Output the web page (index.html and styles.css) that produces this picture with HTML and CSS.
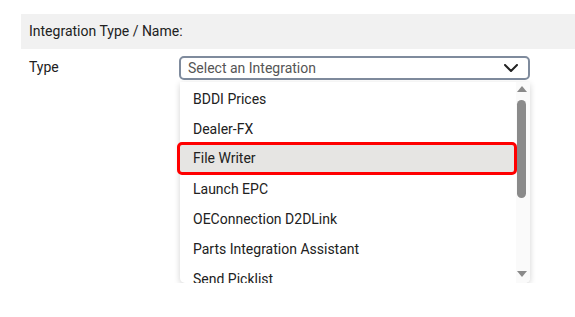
FILE: index.html
```html
<!DOCTYPE html>
<html lang="en">
<head>
    <meta charset="UTF-8">
    <meta name="viewport" content="width=device-width, initial-scale=1.0">
    <title>Integration</title>
    <link rel="stylesheet" href="styles.css">
</head>
<body>
    <div class="container">
        <div class="section-title">Integration Type / Name:</div>
        <div class="form-row">
            <label class="field-label">Type</label>
            <div class="select-wrap">
                <div class="select-box">
                    <span class="placeholder">Select an Integration</span>
                    <svg class="chevron" width="14" height="8" viewBox="0 0 14 8">
                        <path d="M1 1 L7 7 L13 1" fill="none" stroke="#222" stroke-width="2" stroke-linecap="round" stroke-linejoin="round"/>
                    </svg>
                </div>
                <div class="dropdown">
                    <ul class="options">
                        <li>BDDI Prices</li>
                        <li>Dealer-FX</li>
                        <li class="selected">File Writer</li>
                        <li>Launch EPC</li>
                        <li>OEConnection D2DLink</li>
                        <li>Parts Integration Assistant</li>
                        <li>Send Picklist</li>
                    </ul>
                    <div class="scrollbar">
                        <span class="arrow-up"></span>
                        <span class="thumb"></span>
                        <span class="track-gap"></span>
                        <span class="arrow-down"></span>
                    </div>
                </div>
            </div>
        </div>
    </div>
</body>
</html>
```

FILE: styles.css
```css
body {
    margin: 0;
    font-family: Roboto, "Liberation Sans", Arial, sans-serif;
    font-size: 14px;
    color: #212121;
    background: #fff;
}
.container {
    padding: 14px 0 0 21px;
}
.section-title {
    background-color: #f1f1f1;
    height: 35px;
    line-height: 35px;
    padding-left: 8px;
}
.form-row {
    display: flex;
    align-items: flex-start;
    padding-top: 7px;
}
.field-label {
    width: 150px;
    padding-left: 8px;
    line-height: 22px;
}
.select-wrap {
    width: 351px;
    display: flex;
    flex-direction: column;
}
.select-box {
    display: flex;
    align-items: center;
    justify-content: space-between;
    height: 20px;
    border: 2px solid #7f8b9d;
    border-radius: 5px;
    padding: 0 10px 0 7px;
}
.placeholder {
    color: #555;
}
.chevron {
    display: block;
}
.dropdown {
    margin: 2px 0 0 1px;
    height: 201px;
    display: flex;
    background: #fff;
    border-radius: 0 0 5px 5px;
    box-shadow: 0 2px 6px rgba(0,0,0,0.18);
    overflow-x: visible;
    overflow-y: clip;
}
.options {
    flex: 1;
    list-style: none;
    margin: 0;
    padding: 2px 0 0 0;
}
.options li {
    height: 30px;
    line-height: 30px;
    padding-left: 13px;
}
.options li.selected {
    position: relative;
    height: 27px;
    line-height: 27px;
    background-color: #e6e5e3;
    border: 3px solid #ff0000;
    border-radius: 5px;
    margin: -2px -1px -1px -3px;
}
.scrollbar {
    width: 11px;
    padding: 4px 3px 6px 0;
    background: #fafafa;
    border-radius: 0 0 5px 0;
    display: flex;
    flex-direction: column;
    align-items: center;
}
.arrow-up, .arrow-down {
    width: 0;
    height: 0;
    border-left: 5px solid transparent;
    border-right: 5px solid transparent;
}
.arrow-up {
    border-bottom: 6px solid #8a8a8a;
}
.arrow-down {
    border-top: 6px solid #8a8a8a;
}
.thumb {
    width: 9px;
    height: 98px;
    margin-top: 8px;
    background: #8a8a8a;
    border-radius: 5px;
}
.track-gap {
    flex: 1;
}
```
